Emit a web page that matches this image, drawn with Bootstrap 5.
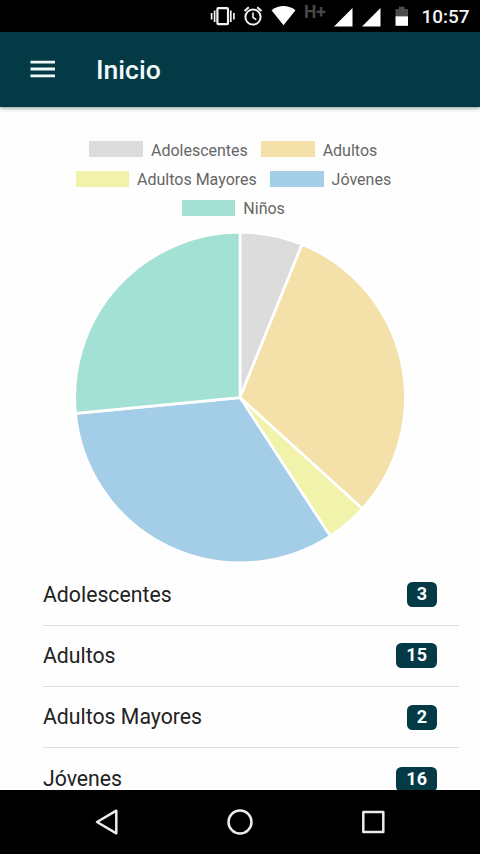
<!DOCTYPE html>
<html lang="es">
<head>
<meta charset="utf-8">
<meta name="viewport" content="width=device-width, initial-scale=1">
<title>Inicio</title>
<link rel="stylesheet" href="https://cdn.jsdelivr.net/npm/bootstrap@5.3.0/dist/css/bootstrap.min.css">
<style>
body{font-family:Roboto,"Liberation Sans",sans-serif;background:#fefefe}
.screen{width:480px;height:854px}
.statusbar{height:32px;background:#000}
.appbar{height:74.5px;background:#033a46;box-shadow:0 1px 4px rgba(0,40,50,.5);padding:0 0 0 30px;z-index:1}
.appbar h1{font-size:26.6px;font-weight:500;line-height:32px;color:#f2fbfc;margin:2px 0 0 41px}
.content{padding-top:29px}
.legend-row{height:29.4px;gap:13.3px;padding-right:13.3px}
.legend-key{gap:8px;font-size:16px;line-height:29.4px;color:#666}
.swatch{width:53.5px;height:16px;margin-top:-1.5px}
.c-ado{background:#dcdcdc;fill:#dcdcdc}
.c-adu{background:#f3e1a9;fill:#f3e1a9}
.c-may{background:#f2f3aa;fill:#f2f3aa}
.c-jov{background:#a4cde7;fill:#a4cde7}
.c-nin{background:#a3e1d4;fill:#a3e1d4}
.pie{width:340px;height:340px;margin-top:5px}
.pie path{background:none;stroke:#fff;stroke-width:2.67}
.rows{margin:-4.2px 21px 0 43px}
.rows .list-group-item{height:61.3px;background:none;padding:0 22px 0 0;border-color:#dedede;font-size:21.25px;color:#222}
.count{background:#033a46;font-size:18px;line-height:17px;padding:3px 10px 5px;border-radius:5.5px;min-width:30px}
.navkeys{height:64px;background:#000}
</style>
</head>
<body>
<div class="screen d-flex flex-column overflow-hidden">
  <div class="statusbar flex-shrink-0">
    <svg class="d-block" width="480" height="32" viewBox="0 0 480 32">
      <g fill="none" stroke="#f2f2f2">
        <rect x="217.400" y="8.200" width="10.600" height="16" rx="1" stroke-width="2.200"/>
        <path d="M214.600 10.500v11.500M211.600 13v6.500M230.800 10.500v11.500M233.900 13v6.500" stroke-width="1.700"/>
        <circle cx="253" cy="17" r="7.600" stroke-width="2"/>
        <path d="M253 12.500v5l3.300 2.200" stroke-width="1.600"/>
        <path d="M244.500 11l4.300-3.800M261.500 11l-4.300-3.800" stroke-width="2"/>
      </g>
      <path d="M271.500 10.200Q283.500 1.800 295.500 10.200L283.500 25.200Z" fill="#fff"/>
      <text x="304" y="17.600" font-size="17.500" font-weight="700" fill="#484848">H+</text>
      <path d="M352.500 8v18.500h-18.500zM380.500 8v18.500h-18.500z" fill="#fff"/>
      <path d="M399 6.800h5.500v2.200h3.500v7.500h-12.500v-7.500h3.500z" fill="#4c4c4c"/>
      <rect x="395.500" y="16.300" width="12.500" height="9.500" fill="#fff"/>
      <text x="421.500" y="23.300" font-size="18.900" font-weight="500" fill="#f4f4f4">10:57</text>
    </svg>
  </div>
  <header class="appbar d-flex align-items-center flex-shrink-0 position-relative">
    <svg width="25" height="18" viewBox="0 0 25 18"><path d="M.5 2.200h24.500M.5 9h24.500M.5 15.800h24.500" stroke="#f0fafa" stroke-width="2.800"/></svg>
    <h1>Inicio</h1>
  </header>
  <main class="content flex-grow-1 overflow-hidden">
    <div class="legend-row d-flex justify-content-center">
      <div class="legend-key d-flex align-items-center"><span class="swatch c-ado"></span>Adolescentes</div>
      <div class="legend-key d-flex align-items-center"><span class="swatch c-adu"></span>Adultos</div>
    </div>
    <div class="legend-row d-flex justify-content-center">
      <div class="legend-key d-flex align-items-center"><span class="swatch c-may"></span>Adultos Mayores</div>
      <div class="legend-key d-flex align-items-center"><span class="swatch c-jov"></span>Jóvenes</div>
    </div>
    <div class="legend-row d-flex justify-content-center">
      <div class="legend-key d-flex align-items-center"><span class="swatch c-nin"></span>Niños</div>
    </div>
    <svg class="pie d-block mx-auto" viewBox="-170.700 -169.300 341.400 341.400">
      <path class="c-ado" d="M0 0V-166A166 166 0 0 1 62.300 -153.900Z"/>
      <path class="c-adu" d="M0 0L62.300 -153.900A166 166 0 0 1 122.900 111.600Z"/>
      <path class="c-may" d="M0 0L122.900 111.600A166 166 0 0 1 90.600 139.100Z"/>
      <path class="c-jov" d="M0 0L90.600 139.100A166 166 0 0 1 -165.200 15.900Z"/>
      <path class="c-nin" d="M0 0L-165.200 15.900A166 166 0 0 1 0 -166Z"/>
    </svg>
    <ul class="rows list-group list-group-flush">
      <li class="list-group-item d-flex align-items-center justify-content-between">Adolescentes<span class="badge count">3</span></li>
      <li class="list-group-item d-flex align-items-center justify-content-between">Adultos<span class="badge count">15</span></li>
      <li class="list-group-item d-flex align-items-center justify-content-between">Adultos Mayores<span class="badge count">2</span></li>
      <li class="list-group-item d-flex align-items-center justify-content-between">Jóvenes<span class="badge count">16</span></li>
    </ul>
  </main>
  <nav class="navkeys flex-shrink-0">
    <svg class="d-block" width="480" height="64" viewBox="0 0 480 64" fill="none" stroke="#ececec" stroke-width="2.500" stroke-linejoin="round">
      <path d="M97 32L116.300 20.700V43.300Z"/>
      <circle cx="240" cy="32" r="11.500"/>
      <rect x="363.300" y="22" width="20" height="20"/>
    </svg>
  </nav>
</div>
<script src="https://cdn.jsdelivr.net/npm/bootstrap@5.3.0/dist/js/bootstrap.bundle.min.js"></script>
</body>
</html>
